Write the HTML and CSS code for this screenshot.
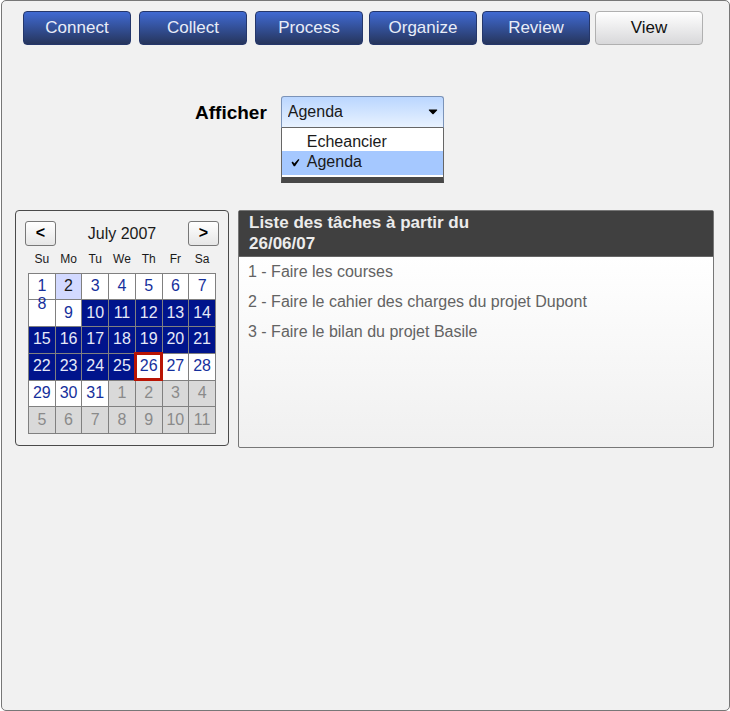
FILE: index.html
```html
<!DOCTYPE html>
<html lang="fr">
<head>
<meta charset="utf-8">
<meta name="viewport" content="width=device-width, initial-scale=1">
<title>Agenda</title>
<link rel="stylesheet" href="styles.css">
</head>
<body>
<div class="window">
  <nav class="tabs">
    <div class="tab-group capture">
      <button type="button" class="tab">Connect</button>
      <button type="button" class="tab">Collect</button>
      <button type="button" class="tab">Process</button>
    </div>
    <div class="tab-group manage">
      <button type="button" class="tab">Organize</button>
      <button type="button" class="tab">Review</button>
      <button type="button" class="tab active" aria-current="page">View</button>
    </div>
  </nav>

  <div class="filter">
    <label class="filter-label" for="display-mode">Afficher</label>
    <div class="dropdown">
      <select id="display-mode" class="dropdown-field">
        <option>Echeancier</option>
        <option selected>Agenda</option>
      </select>
      <svg class="dropdown-arrow" width="10" height="6" viewBox="0 0 10 6" aria-hidden="true"><path d="M1 0.5H9Q9.5 1 9 1.5L5.6 5Q5 5.6 4.4 5L1 1.5Q0.5 1 1 0.5Z" fill="#000"/></svg>
      <ul class="menu" role="listbox" aria-label="Afficher">
        <li class="menu-item" role="option" aria-selected="false">Echeancier</li>
        <li class="menu-item chosen" role="option" aria-selected="true">
          <svg class="menu-check" width="9" height="9" viewBox="0 0 9 9" aria-hidden="true"><path d="M0.5 4.4L1.8 3.6L3.3 5.6L7.4 1L8.4 1.8L4 8.2H2.8Z" fill="#000"/></svg>Agenda</li>
      </ul>
    </div>
  </div>

  <main class="panels">
    <section class="calendar">
      <div class="calendar-bar">
        <button type="button" class="step" aria-label="Previous month">&lt;</button>
        <span class="month">July 2007</span>
        <button type="button" class="step" aria-label="Next month">&gt;</button>
      </div>
      <table class="days">
        <thead>
          <tr><th scope="col">Su</th><th scope="col">Mo</th><th scope="col">Tu</th><th scope="col">We</th><th scope="col">Th</th><th scope="col">Fr</th><th scope="col">Sa</th></tr>
        </thead>
        <tbody>
          <tr><td>1</td><td class="today">2</td><td>3</td><td>4</td><td>5</td><td>6</td><td>7</td></tr>
          <tr><td class="raised">8</td><td>9</td><td class="range">10</td><td class="range">11</td><td class="range">12</td><td class="range">13</td><td class="range">14</td></tr>
          <tr><td class="range">15</td><td class="range">16</td><td class="range">17</td><td class="range">18</td><td class="range">19</td><td class="range">20</td><td class="range">21</td></tr>
          <tr><td class="range">22</td><td class="range">23</td><td class="range">24</td><td class="range">25</td><td class="picked">26</td><td>27</td><td>28</td></tr>
          <tr><td>29</td><td>30</td><td>31</td><td class="outside">1</td><td class="outside">2</td><td class="outside">3</td><td class="outside">4</td></tr>
          <tr><td class="outside">5</td><td class="outside">6</td><td class="outside">7</td><td class="outside">8</td><td class="outside">9</td><td class="outside">10</td><td class="outside">11</td></tr>
        </tbody>
      </table>
    </section>

    <section class="tasks">
      <h2 class="tasks-title">Liste des tâches à partir du<br>26/06/07</h2>
      <ul class="task-list">
        <li>1 - Faire les courses</li>
        <li>2 - Faire le cahier des charges du projet Dupont</li>
        <li>3 - Faire le bilan du projet Basile</li>
      </ul>
    </section>
  </main>
</div>
</body>
</html>
```

FILE: styles.css
```css
* {
  box-sizing: border-box;
}

body {
  margin: 0;
  background: #fff;
  color: #1a1a1a;
  font-family: "Liberation Sans", Arial, sans-serif;
  font-size: 16px;
}

button,
select {
  font: inherit;
}

ul {
  margin: 0;
  padding: 0;
  list-style: none;
}

.window {
  min-height: 100vh;
  margin: 0 0 0 1px;
  padding: 10px 15px 10px 13px;
  border: 1px solid #777;
  border-radius: 5px;
  background: #f1f1f1;
}

/* Navigation */
.tabs {
  display: flex;
  gap: 6px;
  padding: 0 11px 0 8px;
}

.tab-group {
  display: flex;
}

.capture {
  flex: 340 1 0;
  gap: 8px;
}

.manage {
  flex: 334 1 0;
  gap: 5px;
}

.tab {
  flex: 1 1 0;
  height: 34px;
  padding: 0;
  border: 1px solid #25376b;
  border-radius: 4px;
  background: linear-gradient(#406ad2, #26355c);
  color: #e9edf8;
  font-size: 17px;
}

.tab.active {
  border-color: #b0b0b0;
  background: linear-gradient(#fff, #d8d8da);
  color: #111;
}

/* Display mode */
.filter {
  display: flex;
  gap: 14px;
  margin-top: 51px;
  padding-left: 180px;
}

.filter-label {
  color: #000;
  font-size: 19px;
  font-weight: bold;
  line-height: 34px;
}

.dropdown {
  position: relative;
  width: 163px;
  height: 34px;
}

.dropdown-field {
  display: block;
  width: 100%;
  height: 32px;
  padding: 0 24px 2px 6px;
  border: 1px solid #7b93b8;
  border-bottom-color: #666;
  border-radius: 3px 3px 0 0;
  appearance: none;
  background: linear-gradient(#bad6ff, #e8f2ff);
  color: #1a1a1a;
}

.dropdown-arrow {
  position: absolute;
  top: 13px;
  right: 6px;
}

.menu {
  position: absolute;
  top: 32px;
  left: 0;
  width: 100%;
  padding-top: 4px;
  border: 1px solid #666;
  border-top: 0;
  border-bottom: 6px solid #484848;
  background: #fff;
}

.menu-item {
  display: flex;
  align-items: center;
  height: 19px;
  padding-left: 25px;
}

.menu-item.chosen {
  height: 24px;
  margin-bottom: 2px;
  padding: 0 0 2px 9px;
  gap: 7px;
  background: #a5c8ff;
}

/* Panels */
.panels {
  display: flex;
  align-items: flex-start;
  gap: 9px;
  margin-top: 80px;
}

.calendar {
  width: 214px;
  padding: 10px 9px 11px;
  border: 1px solid #4a4a4a;
  border-radius: 4px;
}

.calendar-bar {
  display: flex;
  align-items: center;
  justify-content: space-between;
}

.step {
  width: 31px;
  height: 25px;
  padding: 0 0 2px;
  border: 1px solid #777;
  border-radius: 3px;
  background: linear-gradient(#fff, #e6e6e6);
  color: #000;
  font-weight: bold;
}

.days {
  width: 188px;
  height: 188px;
  margin: 0 auto;
  border-collapse: collapse;
  table-layout: fixed;
}

.days th {
  height: 27px;
  padding: 0;
  font-size: 12px;
  font-weight: normal;
}

.days td {
  padding: 0 0 1px;
  border: 1px solid #808080;
  background: #fff;
  color: #16309c;
  text-align: center;
}

.days .today {
  background: #d2d9ff;
  color: #1a1a1a;
}

.days .range {
  background: #00148c;
  color: #e6e9f8;
}

.days .outside {
  background: #d9d9d9;
  color: #8a8a8a;
}

.days .raised {
  line-height: 8px;
  vertical-align: top;
}

.days .picked {
  outline: 3px solid #b81404;
  outline-offset: -2px;
}

.tasks {
  flex: 1;
  min-height: 238px;
  border: 1px solid #777;
  border-radius: 2px;
  background: linear-gradient(#fff 46px, #f0f0f0);
}

.tasks-title {
  margin: 0;
  padding: 1px 10px 2px;
  border-bottom: 1px solid #666;
  background: #404040;
  color: #ececec;
  font-size: 17px;
  line-height: 21px;
}

.task-list {
  padding: 0 9px;
  color: #636363;
  line-height: 30px;
}
```
